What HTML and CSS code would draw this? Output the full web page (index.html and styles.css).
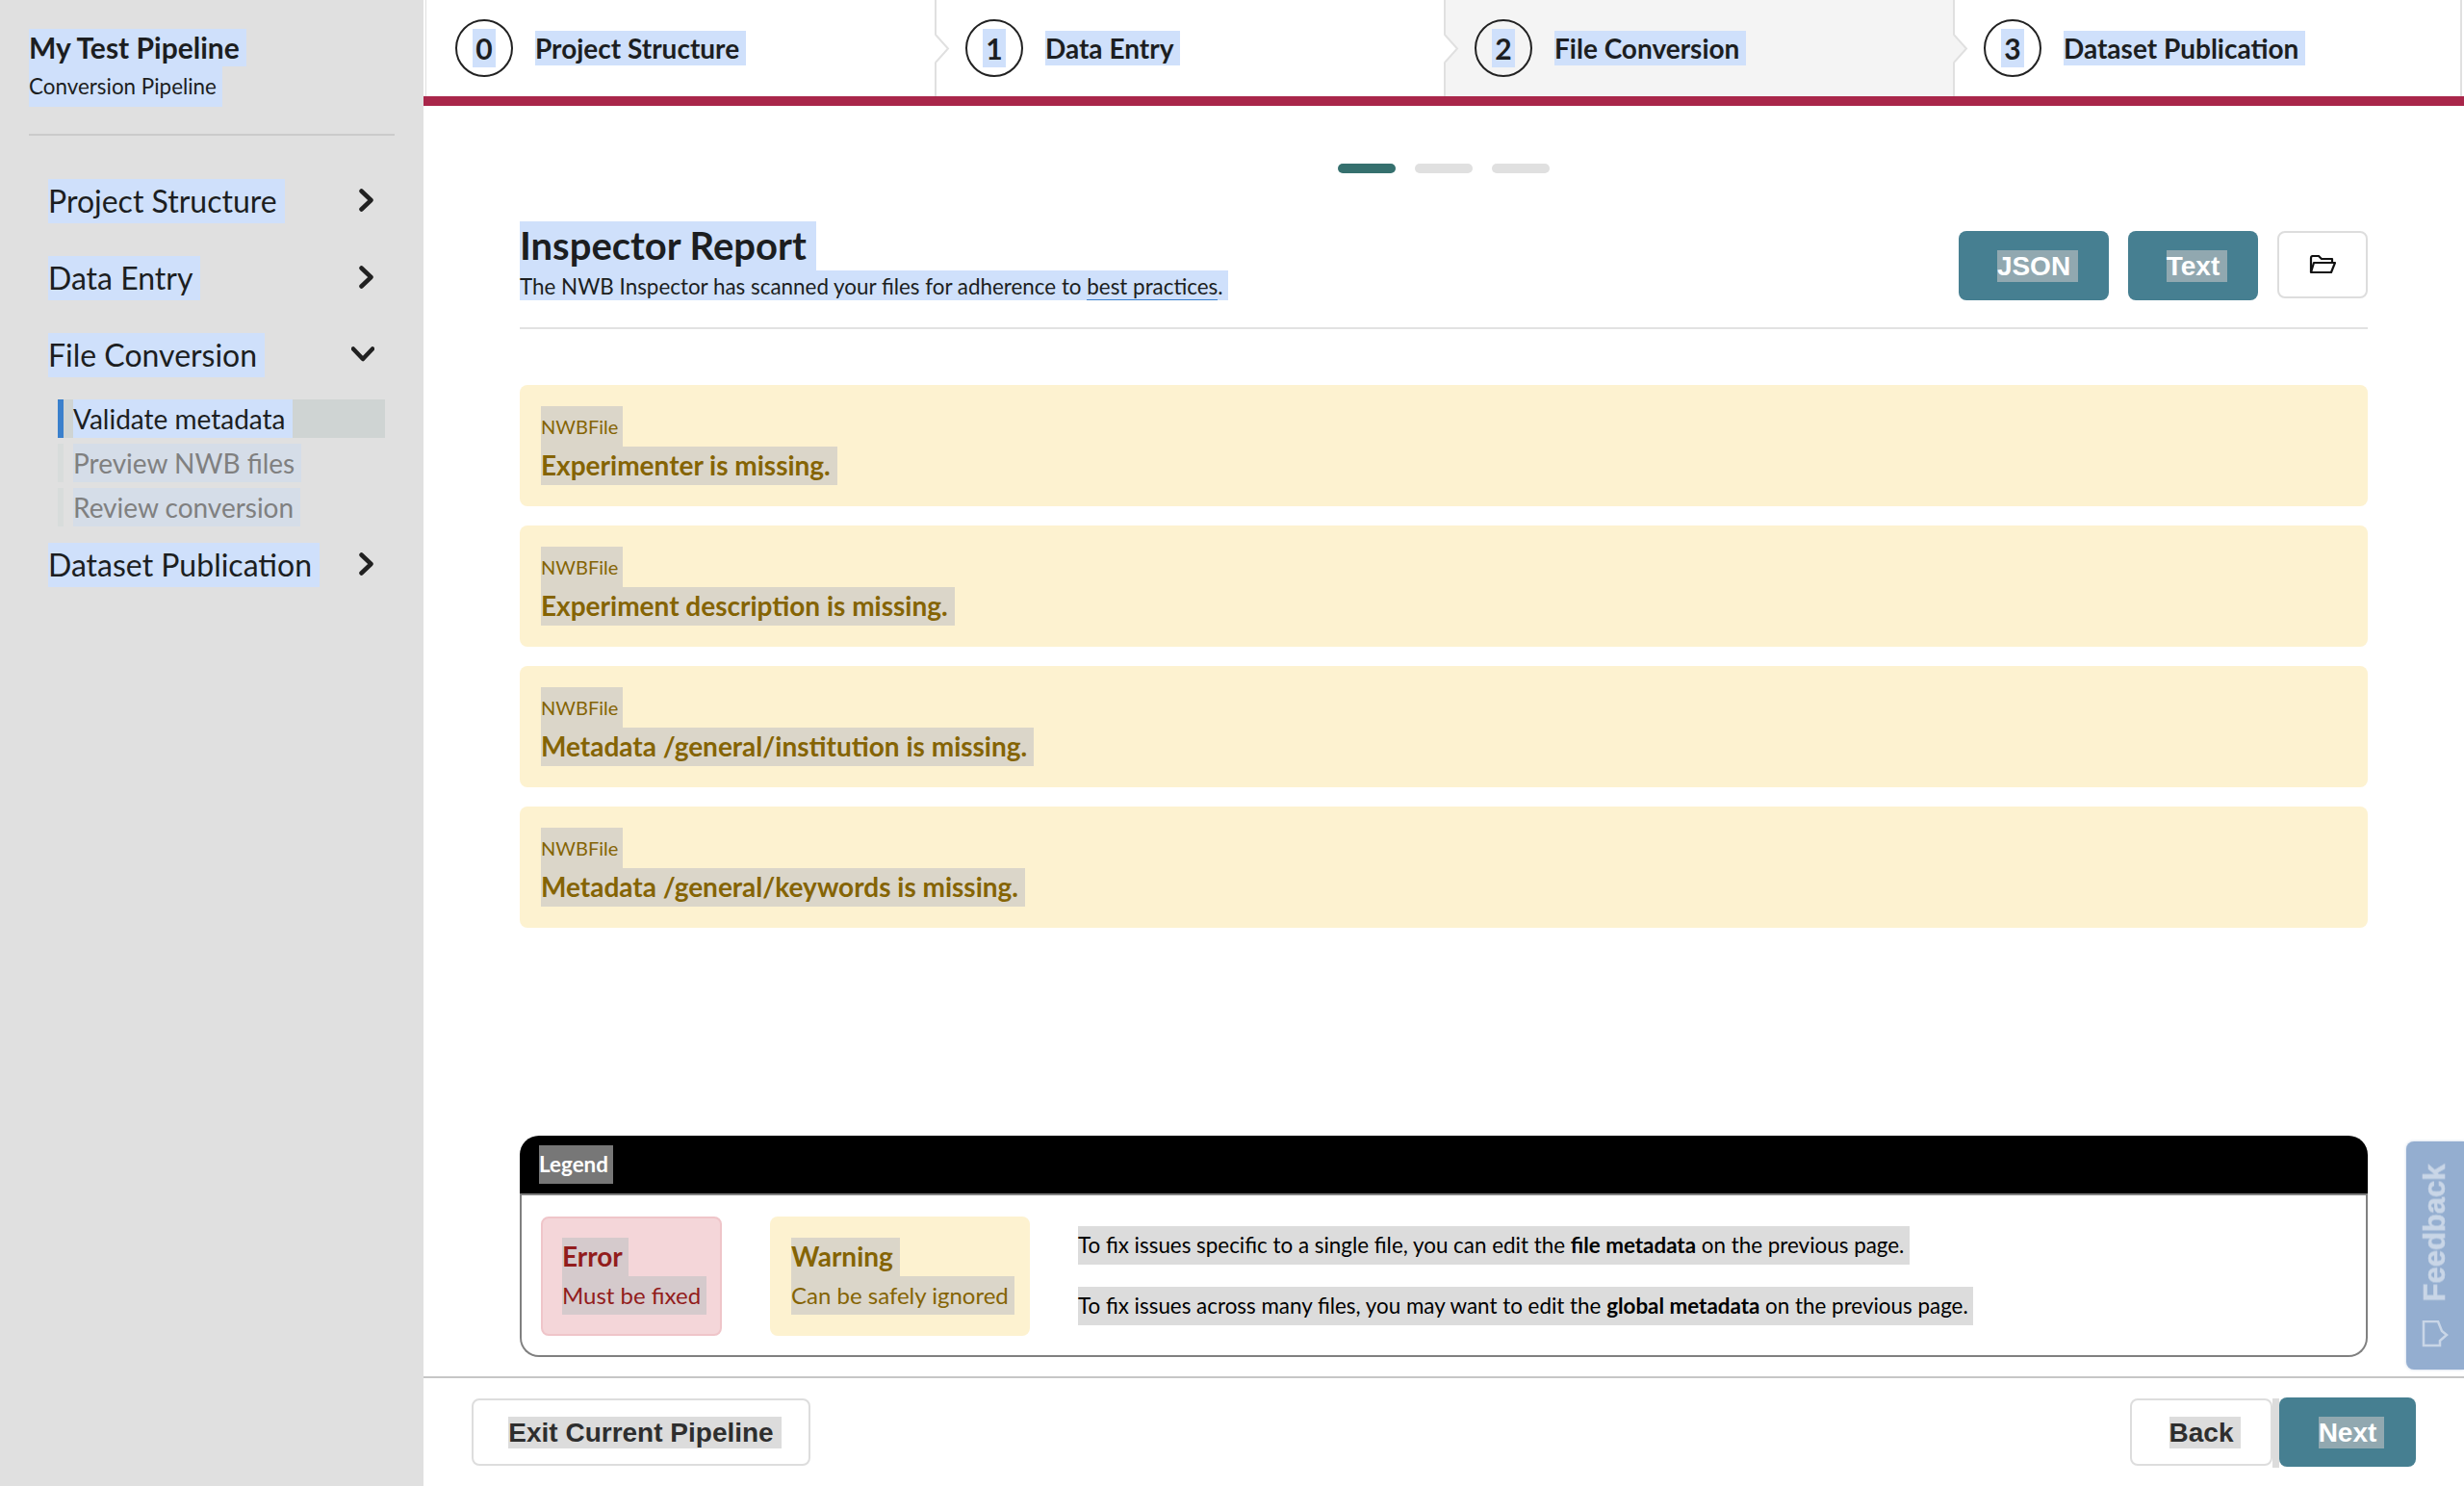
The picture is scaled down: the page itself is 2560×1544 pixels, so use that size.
FILE: index.html
```html
<!DOCTYPE html>
<html lang="en">
<head>
<meta charset="utf-8">
<title>Inspector Report</title>
<link rel="stylesheet" href="styles.css">
</head>
<body>
<div class="app">
  <aside class="sidebar">
    <div class="side-head">
      <div class="line"><span class="hl pipeline-title">My Test Pipeline&nbsp;</span></div>
      <div class="line"><span class="hl pipeline-sub">Conversion Pipeline&nbsp;</span></div>
    </div>
    <nav class="nav">
      <div class="nav-item"><span class="hl nav-label">Project Structure&nbsp;</span>
        <svg class="chev-r" viewBox="0 0 16 24"><path d="M2.5 2.5 12.5 12 2.5 21.5"/></svg></div>
      <div class="nav-item"><span class="hl nav-label">Data Entry&nbsp;</span>
        <svg class="chev-r" viewBox="0 0 16 24"><path d="M2.5 2.5 12.5 12 2.5 21.5"/></svg></div>
      <div class="nav-item"><span class="hl nav-label">File Conversion&nbsp;</span>
        <svg class="chev-d" viewBox="0 0 24 16"><path d="M2 2.5 12 13 22 2.5"/></svg></div>
      <div class="sub-list">
        <div class="sub-item active"><span class="hl sub-label">Validate metadata&nbsp;</span></div>
        <div class="sub-item"><span class="hl sub-label">Preview NWB files&nbsp;</span></div>
        <div class="sub-item"><span class="hl sub-label">Review conversion&nbsp;</span></div>
      </div>
      <div class="nav-item"><span class="hl nav-label">Dataset Publication&nbsp;</span>
        <svg class="chev-r" viewBox="0 0 16 24"><path d="M2.5 2.5 12.5 12 2.5 21.5"/></svg></div>
    </nav>
  </aside>
  <main class="main">
    <header class="stepper">
      <div class="step">
        <span class="circle"><span class="hl digit">0</span></span><span class="hl step-label">Project Structure&nbsp;</span>
      </div>
      <div class="step">
        <svg class="arrow arrow-white" viewBox="0 0 18 29"><path class="arrow-fill" d="M0 0 14 14.5 0 29z"/><path class="arrow-line" d="M1 0 14 14.5 1 29"/></svg>
        <span class="circle"><span class="hl digit">1</span></span><span class="hl step-label">Data Entry&nbsp;</span>
      </div>
      <div class="step current">
        <svg class="arrow arrow-white" viewBox="0 0 18 29"><path class="arrow-fill" d="M0 0 14 14.5 0 29z"/><path class="arrow-line" d="M1 0 14 14.5 1 29"/></svg>
        <span class="circle"><span class="hl digit">2</span></span><span class="hl step-label">File Conversion&nbsp;</span>
      </div>
      <div class="step">
        <svg class="arrow arrow-gray" viewBox="0 0 18 29"><path class="arrow-fill" d="M0 0 14 14.5 0 29z"/><path class="arrow-line" d="M1 0 14 14.5 1 29"/></svg>
        <span class="circle"><span class="hl digit">3</span></span><span class="hl step-label">Dataset Publication&nbsp;</span>
      </div>
    </header>
    <div class="dots"><span class="dot on"></span><span class="dot"></span><span class="dot"></span></div>
    <section class="content">
      <div class="report-head">
        <div class="report-titles">
          <div class="line"><span class="hl report-title">Inspector Report&nbsp;</span></div>
          <div class="line"><span class="hl report-sub">The NWB Inspector has scanned your files for adherence to <a class="link" href="#">best practices</a>.&nbsp;</span></div>
        </div>
        <div class="report-actions">
          <button class="btn primary json"><span class="hl-btn on-teal">JSON</span></button>
          <button class="btn primary text"><span class="hl-btn on-teal">Text</span></button>
          <button class="btn plain folder"><svg class="folder-icon" viewBox="0 0 28 20"><path d="M2 18V3q0-2 2-2h6l3 3h11v4"/><path d="M2 18 5 8h22l-4 10z"/></svg></button>
        </div>
      </div>
      <div class="cards">
        <div class="card"><div class="line"><span class="hl-warn card-type">NWBFile&nbsp;</span></div><div class="line"><span class="hl-warn card-msg">Experimenter is missing.&nbsp;</span></div></div>
        <div class="card"><div class="line"><span class="hl-warn card-type">NWBFile&nbsp;</span></div><div class="line"><span class="hl-warn card-msg">Experiment description is missing.&nbsp;</span></div></div>
        <div class="card"><div class="line"><span class="hl-warn card-type">NWBFile&nbsp;</span></div><div class="line"><span class="hl-warn card-msg">Metadata /general/institution is missing.&nbsp;</span></div></div>
        <div class="card"><div class="line"><span class="hl-warn card-type">NWBFile&nbsp;</span></div><div class="line"><span class="hl-warn card-msg">Metadata /general/keywords is missing.&nbsp;</span></div></div>
      </div>
      <div class="legend">
        <div class="legend-head"><span class="legend-title">Legend&nbsp;</span></div>
        <div class="legend-body">
          <div class="key error"><div class="line"><span class="key-title">Error&nbsp;</span></div><div class="line"><span class="key-sub">Must be fixed&nbsp;</span></div></div>
          <div class="key warning"><div class="line"><span class="key-title">Warning&nbsp;</span></div><div class="line"><span class="key-sub">Can be safely ignored&nbsp;</span></div></div>
          <div class="legend-notes">
            <div class="line"><span class="note">To fix issues specific to a single file, you can edit the <b>file metadata</b> on the previous page.&nbsp;</span></div>
            <div class="line"><span class="note">To fix issues across many files, you may want to edit the <b>global metadata</b> on the previous page.&nbsp;</span></div>
          </div>
        </div>
      </div>
    </section>
    <footer class="footer">
      <button class="btn plain exit"><span class="hl-btn on-white">Exit Current Pipeline</span></button>
      <div class="footer-right">
        <button class="btn plain back"><span class="hl-btn on-white">Back</span></button>
        <span class="btn-gap"></span>
        <button class="btn primary next"><span class="hl-btn on-teal">Next</span></button>
      </div>
    </footer>
  </main>
</div>
<div class="feedback">
  <svg class="feedback-icon" viewBox="0 0 28 28"><path d="M2 1H17L21 11 26 15 19 21V26H2z"/></svg>
  <span class="feedback-text">Feedback</span>
</div>
</body>
</html>
```
FILE: styles.css
```css
* { box-sizing: border-box; }
html, body { margin: 0; height: 100%; }
body { font-family: Lato, "Open Sans", sans-serif; color: #1c1e21; background: #fff; overflow: hidden; font-variant-ligatures: common-ligatures; text-rendering: optimizeLegibility; }
.line { display: block; line-height: 0; }
.app { display: flex; width: 2560px; height: 1544px; }

.hl, .hl-warn, .hl-btn, .legend-title, .key-title, .key-sub, .note { display: inline-block; white-space: pre; vertical-align: top; }
.hl { background: #cfe0fb; }

.sidebar { width: 440px; flex: none; background: #e0e0e0; padding: 30px 30px 0; }
.side-head { height: 109px; }
.pipeline-title { font-size: 30px; font-weight: 700; line-height: 39px; }
.pipeline-sub { font-size: 22.4px; line-height: 42px; }
.nav { border-top: 2px solid #cbcbcb; padding: 45px 0 0 20px; }
.nav-item { display: flex; align-items: center; height: 46px; margin-bottom: 34px; position: relative; }
.nav-label { font-size: 32px; line-height: 46px; }
.chev-r, .chev-d { position: absolute; fill: none; stroke: #212121; stroke-width: 4.5; stroke-linecap: round; stroke-linejoin: round; }
.chev-r { left: 323px; top: 10px; width: 16px; height: 24px; }
.chev-d { left: 315px; top: 14px; width: 24px; height: 16px; }
.sub-list { margin: -11px 0 17px 10px; width: 340px; display: flex; flex-direction: column; gap: 6px; }
.sub-item { height: 40px; border-left: 6px solid #d8dcdb; padding-left: 10px; }
.sub-item.active { border-left-color: #3a80cc; background: #cfd4d3; }
.sub-label { font-size: 28px; line-height: 40px; color: #808080; background: #d5dde8; }
.active .sub-label { color: #1c1e21; background: #cfe0fb; }

.main { flex: 1; min-width: 0; display: flex; flex-direction: column; }
.stepper { display: flex; height: 110px; flex: none; border-bottom: 10px solid #a9264a; padding-left: 2px; padding-right: 2px; }
.step { flex: none; width: 529px; display: flex; align-items: center; position: relative; border-left: 2px solid #e0e0e0; padding-left: 30px; }
.step:first-child { border-left-width: 1px; }
.step:last-child { border-right: 2px solid #e0e0e0; }
.step.current { background: #f4f4f4; }
.arrow { position: absolute; left: -2px; top: 36px; width: 18px; height: 29px; }
.arrow-fill { stroke: none; }
.arrow-line { fill: none; stroke: #e0e0e0; stroke-width: 2; }
.arrow-white .arrow-fill { fill: #fff; }
.arrow-gray .arrow-fill { fill: #f4f4f4; }
.circle { width: 60px; height: 60px; flex: none; border: 2px solid #222; border-radius: 50%; display: flex; align-items: center; justify-content: center; }
.digit { font-size: 30px; font-weight: 700; line-height: 40px; padding: 0 3px; }
.step-label { margin-left: 23px; font-size: 28px; font-weight: 700; line-height: 36px; }

.dots { display: flex; justify-content: center; gap: 20px; margin-top: 60px; flex: none; }
.dot { width: 60px; height: 10px; border-radius: 5px; background: #e0e0e0; }
.dot.on { background: #35706e; }

.content { flex: 1; min-height: 0; padding: 50px 100px 0; display: flex; flex-direction: column; }
.report-head { display: flex; justify-content: space-between; height: 112px; border-bottom: 2px solid #e2e2e2; flex: none; }
.report-title { font-size: 40px; font-weight: 700; line-height: 51px; }
.report-sub { font-size: 22.4px; line-height: 28px; padding-top: 3px; }
.link { color: inherit; text-decoration: none; border-bottom: 1px solid #3a80cc; }
.report-actions { display: flex; align-items: flex-start; gap: 20px; margin-top: 10px; }
.btn { font-family: "Liberation Sans", Arial, sans-serif; font-weight: 700; font-size: 28px; border-radius: 8px; display: flex; align-items: center; justify-content: center; padding: 0; }
.primary { background: #467f91; border: 0; height: 72px; color: #fff; }
.plain { background: #fff; border: 2px solid #ddd; height: 70px; color: #2e2e2e; }
.hl-btn { line-height: 33px; padding-right: 8px; margin-right: -8px; }
.on-teal { background: #91a8b0; }
.on-white { background: #dcdcdc; }
.json { width: 156px; }
.text { width: 135px; }
.folder { width: 94px; }
.folder-icon { width: 28px; height: 20px; fill: none; stroke: #111; stroke-width: 2.2; stroke-linejoin: round; }

.cards { display: flex; flex-direction: column; gap: 20px; margin-top: 58px; flex: none; }
.card { height: 126px; background: #fdf2d0; border-radius: 8px; padding: 22px; color: #856404; }
.hl-warn { background: #dbd6c9; }
.card-type { font-size: 20px; line-height: 42px; }
.card-msg { font-size: 28px; font-weight: 700; line-height: 38px; padding-bottom: 2px; }

.legend { margin-top: auto; height: 230px; flex: none; margin-bottom: 20px; display: flex; flex-direction: column; }
.legend-head { height: 62px; background: #000; border-bottom: 2px solid #808080; border-radius: 20px 20px 0 0; padding: 10px 20px; flex: none; }
.legend-title { background: #777; color: #fff; font-size: 22.4px; font-weight: 700; line-height: 40px; }
.legend-body { flex: 1; display: flex; border: 2px solid #808080; border-top: 0; border-radius: 0 0 20px 20px; padding: 22px 20px 0; }
.key { height: 124px; border-radius: 8px; padding: 20px; margin-right: 50px; }
.key-title { font-size: 28px; font-weight: 700; line-height: 38px; padding-bottom: 2px; }
.key-sub { font-size: 24px; line-height: 40px; }
.error { width: 188px; background: #f4d6d9; border: 2px solid #efc5c9; color: #921c1c; }
.error .key-title, .error .key-sub { background: #d5cacc; }
.warning { width: 270px; background: #fdf2d0; border: 2px solid #fdf2d0; color: #856404; }
.warning .key-title, .warning .key-sub { background: #dbd6c9; }
.legend-notes { display: flex; flex-direction: column; gap: 23px; margin-top: 10px; }
.note { background: #dcdcdc; color: #000; font-size: 22.4px; line-height: 40px; }

.footer { height: 114px; flex: none; border-top: 2px solid #c6c6c6; display: flex; justify-content: space-between; padding: 21px 50px 0; }
.footer-right { display: flex; align-items: flex-start; }
.exit { width: 352px; }
.back { width: 148px; }
.btn-gap { width: 7px; height: 72px; background: #dcdcdc; }
.next { width: 142px; margin-top: -1px; }

.feedback { position: absolute; left: 2500px; top: 1186px; width: 60px; height: 237px; background: #94aed0; border-radius: 8px 0 0 8px; box-shadow: 0 0 3px rgba(148,174,208,.6); }
.feedback-text { position: absolute; left: 50%; top: 95px; transform: translate(-50%, -50%) rotate(-90deg); font-family: "Liberation Sans", Arial, sans-serif; font-weight: 700; font-size: 31px; color: #c9d6e7; -webkit-text-stroke: .6px #c9d6e7; white-space: nowrap; filter: blur(.5px); }
.feedback-icon { position: absolute; left: 16px; top: 186px; width: 28px; height: 28px; fill: none; stroke: #c9d6e7; stroke-width: 2.5; filter: blur(.5px); }
```
